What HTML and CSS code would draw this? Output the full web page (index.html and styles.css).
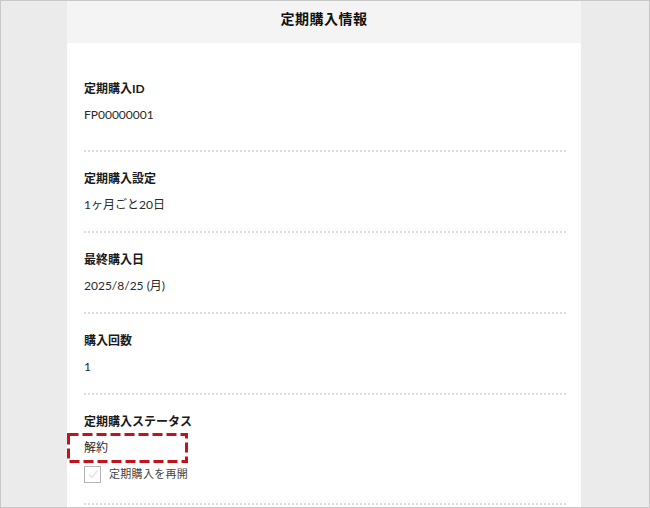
FILE: index.html
```html
<!DOCTYPE html>
<html lang="ja">
<head>
    <meta charset="UTF-8">
    <meta name="viewport" content="width=device-width, initial-scale=1.0">
    <title>定期購入情報</title>
    <link rel="stylesheet" href="styles.css">
</head>
<body>
    <div class="frame">
        <div class="card">
            <h1 class="card-title">定期購入情報</h1>

            <dl class="info-list">
                <div class="info-item info-item-first">
                    <dt>定期購入ID</dt>
                    <dd>FP00000001</dd>
                </div>
                <div class="info-item">
                    <dt>定期購入設定</dt>
                    <dd>1ヶ月ごと20日</dd>
                </div>
                <div class="info-item">
                    <dt>最終購入日</dt>
                    <dd>2025/8/25 (月)</dd>
                </div>
                <div class="info-item">
                    <dt>購入回数</dt>
                    <dd>1</dd>
                </div>
                <div class="info-item">
                    <dt>定期購入ステータス</dt>
                    <dd class="status">解約
                        <svg class="highlight" width="121" height="30" viewBox="0 0 121 30">
                            <rect x="1.5" y="1.5" width="118" height="27" fill="none" stroke="#c4121a" stroke-width="3" stroke-dasharray="10 4"/>
                        </svg>
                    </dd>
                    <label class="restart">
                        <span class="checkbox">
                            <svg width="14" height="14" viewBox="0 0 14 14"><path d="M3 7.5 L6 10.5 L11.5 3.5" fill="none" stroke="#e4e4e4" stroke-width="1.4"/></svg>
                        </span>
                        定期購入を再開
                    </label>
                </div>
            </dl>
        </div>
    </div>
</body>
</html>
```

FILE: styles.css
```css
body {
    margin: 0;
    font-family: Lato, "Noto Sans CJK JP", sans-serif;
    color: #222;
}
.frame {
    box-sizing: border-box;
    width: 650px;
    height: 508px;
    border: 1px solid #c8c8c8;
    background-color: #ebebeb;
    overflow: hidden;
}
.card {
    width: 514px;
    margin-left: 66px;
    min-height: 600px;
    background: #fff;
}
.card-title {
    margin: 0;
    height: 42px;
    line-height: 36px;
    background-color: #f4f4f4;
    font-size: 14px;
    font-weight: bold;
    letter-spacing: 0.5px;
    text-align: center;
    color: #111;
}
.info-list {
    margin: 0;
    padding: 20px 15px 0 17px;
}
.info-item {
    position: relative;
    padding: 15px 0 14px;
    border-bottom: 2px dotted #dcdcdc;
}
.info-item-first {
    padding-top: 14px;
    padding-bottom: 23px;
}
.info-item:last-child {
    padding-bottom: 20px;
}
.info-item dt {
    font-size: 12px;
    font-weight: bold;
    line-height: 24px;
    color: #1a1a1a;
}
.info-item dd {
    margin: 2px 0 0;
    font-size: 12px;
    line-height: 24px;
    color: #2a2a2a;
}
.status {
    position: relative;
}
.highlight {
    position: absolute;
    left: -17px;
    top: -3px;
}
.restart {
    display: flex;
    align-items: center;
    gap: 8px;
    margin-top: 5px;
    font-size: 11px;
    letter-spacing: 0.3px;
    color: #444;
    line-height: 18px;
}
.checkbox {
    box-sizing: border-box;
    width: 17px;
    height: 17px;
    border: 1px solid #b4b4b4;
    display: flex;
    align-items: center;
    justify-content: center;
}
```
